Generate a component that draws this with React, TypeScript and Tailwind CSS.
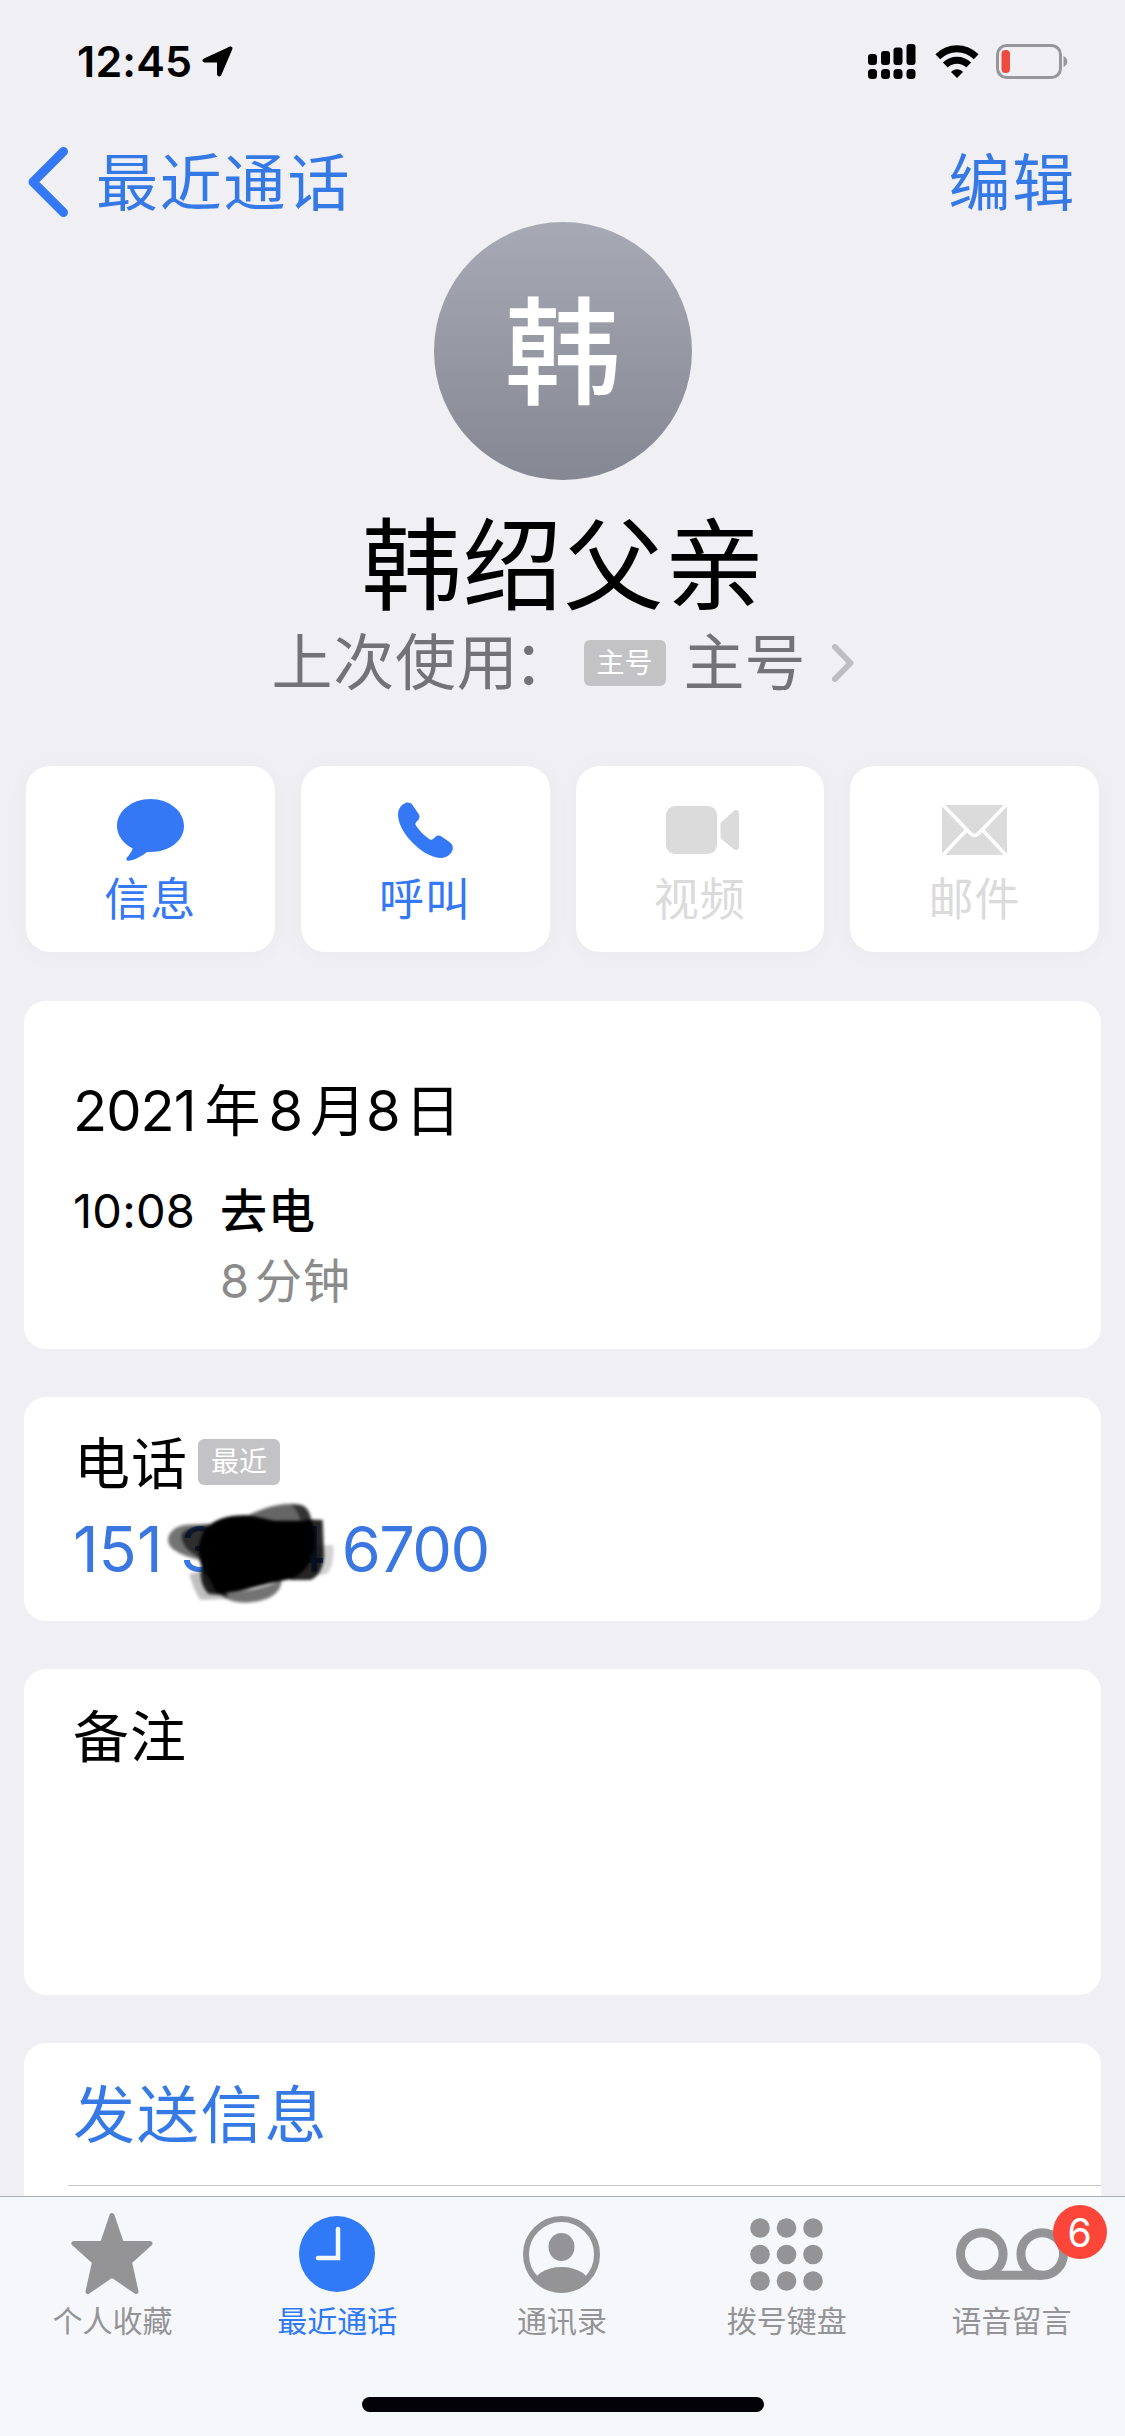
import type { ReactNode } from "react";

type QuickAction = {
  id: string;
  label: string;
  enabled: boolean;
  icon: ReactNode;
};

type Tab = {
  id: string;
  label: string;
  icon: ReactNode;
  badge?: number;
};

const actions: QuickAction[] = [
  {
    id: "message",
    label: "信息",
    enabled: true,
    icon: (
      <svg width="67" height="62" viewBox="0 0 67 62" fill="currentColor">
        <path d="M33.500 0C52 0 67 12 67 27S52 53 33.500 53h-3.500C25 57 18 61 12 61.800 9.600 62 8.600 60 10 58.500c2.400-2.600 4.600-5.600 5.700-9C6.200 44.800 0 36.500 0 27 0 12 15 0 33.500 0z" />
      </svg>
    ),
  },
  {
    id: "call",
    label: "呼叫",
    enabled: true,
    icon: (
      <svg width="55" height="56" viewBox="0 0 55 56" fill="currentColor">
        <path d="M7.500 1C9.500 .2 12.500 .4 14.500 3l6.300 9.300c1.300 2.300.7 4.300-.9 6l-1.800 2c-1 1.100-.9 2 0 3.500 1.800 2.800 4 5.300 6.300 7.600 2.300 2.200 4.700 4.200 7.200 5.800 1.300.9 2.400.8 3.400-.1l2.300-2.200c1.500-1.500 3.600-2 5.800-.7l8.700 6c3.700 2.700 3.900 7.300 1.200 10.800-2.600 3.300-6.500 5-10.700 5C32 55.500 20.500 47.500 12 38 4.800 29.800 0 20.500 0 12.500 0 7.500 3 2.800 7.500 1z" />
      </svg>
    ),
  },
  {
    id: "video",
    label: "视频",
    enabled: false,
    icon: (
      <svg className="ml-[6px]" width="73" height="48" viewBox="0 0 73 48" fill="currentColor">
        <rect width="51" height="48" rx="9" />
        <path d="M54.500 17 67.500 5.200c2.300-2 5.500-1.200 5.500 2V41c0 3-3.200 4-5.500 2L56 33.500c-1-.9-1.500-2-1.500-3.500z" />
      </svg>
    ),
  },
  {
    id: "mail",
    label: "邮件",
    enabled: false,
    icon: (
      <svg width="65" height="50" viewBox="0 0 65 50">
        <rect width="65" height="50" rx="2" fill="currentColor" />
        <path d="M1 0 28.500 28.500c2.500 2.600 5.500 2.600 8 0L64 0M1 50 24.500 25M64 50 40.500 25" fill="none" stroke="#fff" strokeWidth="3.500" />
      </svg>
    ),
  },
];

const tabs: Tab[] = [
  {
    id: "favorites",
    label: "个人收藏",
    icon: (
      <svg width="82" height="82" viewBox="0 0 82 82" fill="currentColor" stroke="currentColor" strokeWidth="5" strokeLinejoin="round">
        <path d="M41 2.500 50.500 30.500H79L58.500 49 65 78.500 41 62 17 78.500 23.500 49 3 30.500H31.500z" />
      </svg>
    ),
  },
  {
    id: "recents",
    label: "最近通话",
    icon: (
      <svg width="76" height="76" viewBox="0 0 76 76">
        <circle cx="38" cy="38" r="38" fill="currentColor" />
        <path d="M39 13V42H19" fill="none" stroke="#f7f8fc" strokeWidth="4.500" strokeLinecap="round" strokeLinejoin="miter" />
      </svg>
    ),
  },
  {
    id: "contacts",
    label: "通讯录",
    icon: (
      <svg width="77" height="77" viewBox="0 0 77 77">
        <clipPath id="contact-ring">
          <circle cx="38.500" cy="38.500" r="36" />
        </clipPath>
        <circle cx="38.500" cy="38.500" r="35.500" fill="none" stroke="currentColor" strokeWidth="6" />
        <ellipse cx="38.500" cy="31" rx="13" ry="14" fill="currentColor" />
        <ellipse cx="38.500" cy="70" rx="29" ry="19" fill="currentColor" clipPath="url(#contact-ring)" />
      </svg>
    ),
  },
  {
    id: "keypad",
    label: "拨号键盘",
    icon: (
      <svg width="73" height="73" viewBox="0 0 73 73" fill="currentColor">
        {[10, 36.5, 63].map((cy) =>
          [10, 36.5, 63].map((cx) => <circle key={`${cx}-${cy}`} cx={cx} cy={cy} r="9.800" />)
        )}
      </svg>
    ),
  },
  {
    id: "voicemail",
    label: "语音留言",
    badge: 6,
    icon: (
      <svg width="112" height="52" viewBox="0 0 112 52" fill="none" stroke="currentColor" strokeWidth="9">
        <circle cx="25.800" cy="26" r="21.300" />
        <circle cx="86.200" cy="26" r="21.300" />
        <path d="M25.800 47.200H86.200" />
      </svg>
    ),
  },
];

function StatusBar() {
  return (
    <div className="flex h-[122px] items-center justify-between pt-[1px] pr-[57px] pl-[77px]">
      <div className="flex items-center">
        <span className="text-[43px] leading-none font-semibold tracking-[0.2px]">12:45</span>
        <svg className="ml-[10px]" width="31" height="31" viewBox="0 0 31 31">
          <path d="M2 12.500 27.500 .8c2-.9 3.600.6 2.700 2.700L19.300 29c-1 2.300-4.300 1.700-4.300-.9V16.500H3C.2 16.500-.6 13.700 2 12.500z" />
        </svg>
      </div>
      <div className="flex items-center">
        <svg width="48" height="35" viewBox="0 0 48 35">
          <rect x="0" y="10" width="9" height="11" rx="3" />
          <rect x="13" y="7" width="9" height="14" rx="3" />
          <rect x="25.500" y="3.500" width="9" height="17.500" rx="3" />
          <rect x="38.500" y="0" width="9" height="21" rx="3" />
          <rect x="0" y="25" width="9" height="10" rx="3.500" />
          <rect x="13" y="25" width="9" height="10" rx="3.500" />
          <rect x="25.500" y="25" width="9" height="10" rx="3.500" />
          <rect x="38.500" y="25" width="9" height="10" rx="3.500" />
        </svg>
        <svg className="ml-[19px]" width="44" height="33" viewBox="0 0 44 33">
          <path d="M2.800 11.800C14 1.200 30 1.200 41.200 11.800" fill="none" stroke="#000" strokeWidth="7" />
          <path d="M10.300 20C17 13.700 27 13.700 33.700 20" fill="none" stroke="#000" strokeWidth="7" />
          <path d="M22 33 16 27c3.500-3.800 8.500-3.800 12 0z" />
        </svg>
        <svg className="ml-[17px]" width="72" height="35" viewBox="0 0 72 35">
          <rect x="1.500" y="1.500" width="63" height="32" rx="9" fill="none" stroke="#97979b" strokeWidth="3" />
          <rect x="5.500" y="6" width="8.500" height="23" rx="4" fill="#ee4a40" />
          <path d="M67.500 12c5 2 5 9 0 11z" fill="#97979b" />
        </svg>
      </div>
    </div>
  );
}

function Tag({ children }: { children: ReactNode }) {
  return (
    <span className="flex h-[46px] w-[82px] items-center justify-center rounded-[6px] bg-[#c3c3c6] pt-[1px] text-[28px] leading-none text-white">
      {children}
    </span>
  );
}

// Hand-drawn marker strokes over the middle of the number
function Scribble() {
  return (
    <svg className="absolute top-[-14px] left-[77px]" width="200" height="124" viewBox="0 0 600 372">
      <defs>
        <filter id="soft">
          <feGaussianBlur stdDeviation="4" />
        </filter>
      </defs>
      <g filter="url(#soft)">
        {/* lighter passes around the edge */}
        <path d="M270 88C320 62 370 42 420 42c40-2 54 8 62 36l6 32-200 10z" opacity=".6" />
        <path d="M424 44c30-4 46 8 54 32l12 36-34 4c-4-30-12-54-32-72z" opacity=".5" />
        <path d="M54 150c0-24 24-44 60-46l110-4-20 120c-60-8-150-30-150-70z" opacity=".55" />
        <path d="M96 130c20-18 60-26 100-26v110c-50-4-110-40-100-84z" opacity=".6" />
        <path d="M118 252l60-16 60 90-86 4c-16-20-26-48-34-78z" opacity=".25" />
        <path d="M152 240h60l20 76-56-4c-18-16-26-44-24-72z" opacity=".85" />
        <path d="M200 300c60 10 130 0 194-30 2 40-40 66-108 68-44 0-72-14-86-38z" opacity=".55" />
        <path d="M470 88l48 2 4 110c-4 40-18 60-42 70h-60z" opacity=".85" />
        <path d="M500 166h50c2 40-4 70-20 86l-40 6z" opacity=".18" />
        {/* solid core */}
        <path d="M172 112C196 86 240 74 290 76c28 2 54 12 84 16h110c14 40 14 80 2 104-10 32-26 54-60 70-40 8-86 16-136 32-30 8-64 12-92 8-10-16-16-40-38-62-16-36-24-90 12-132z" />
      </g>
    </svg>
  );
}

export default function App() {
  return (
    <div className="flex h-[2436px] w-[1125px] flex-col overflow-hidden bg-[#f0eff4] text-black [font-family:Inter,'Noto_Sans_CJK_SC',sans-serif]">
      <StatusBar />

      {/* Navigation */}
      <nav className="flex h-[100px] shrink-0 items-center justify-between pt-[20px] pr-[49px] pl-[28px] text-[62px] leading-none tracking-[1.800px] text-[#3579e6]">
        <a className="flex items-center">
          <svg width="40" height="70" viewBox="0 0 40 70" fill="none" stroke="#3478f6" strokeWidth="9" strokeLinecap="round" strokeLinejoin="round">
            <path d="M35.500 4.500 5 35 35.500 65.500" />
          </svg>
          <span className="ml-[28px] pt-[3px]">最近通话</span>
        </a>
        <a className="pt-[3px]">编辑</a>
      </nav>

      {/* Contact header */}
      <header className="flex shrink-0 flex-col items-center">
        <div className="flex size-[258px] items-center justify-center rounded-full bg-linear-to-b from-[#a7a9b5] to-[#858792] pt-[4px] text-[116px] leading-none font-medium text-white">
          韩
        </div>
        <h1 className="mt-[26px] pl-[2px] text-[100px] leading-[120px] tracking-[1px]">韩绍父亲</h1>
        <div className="flex h-[73px] items-center text-[61px] leading-none text-[#737377]">
          <span className="pt-[2px] tracking-[0.800px]">上次使用</span>
          <span className="-ml-[5px] pt-[2px]">：</span>
          <span className="ml-[9px]">
            <Tag>主号</Tag>
          </span>
          <span className="ml-[18px] pt-[2px]">主号</span>
          <svg className="ml-[26px]" width="22" height="38" viewBox="0 0 22 38" fill="none" stroke="#bebec2" strokeWidth="6" strokeLinecap="round" strokeLinejoin="round">
            <path d="M3 3 18.500 19 3 35" />
          </svg>
        </div>
      </header>

      {/* Quick actions */}
      <div className="mt-[67px] grid shrink-0 grid-cols-4 gap-[26px] px-[26px]">
        {actions.map((action) => (
          <button
            key={action.id}
            className={`flex h-[186px] flex-col items-center rounded-[24px] bg-white pt-[28px] shadow-[0_2px_24px_rgba(0,0,0,0.03)] ${
              action.enabled ? "text-[#3478f6]" : "text-[#dbdbdb]"
            }`}
          >
            <span className="flex h-[72px] items-center">{action.icon}</span>
            <span className="mt-[9px] text-[45px] leading-[50px] tracking-[1px]">{action.label}</span>
          </button>
        ))}
      </div>

      <main className="mt-[49px] flex min-h-0 flex-1 flex-col gap-[48px] px-[24px]">
        {/* Call log */}
        <section className="h-[348px] shrink-0 rounded-[22px] bg-white px-[49px] pt-[70px]">
          <div className="flex h-[80px] items-center text-[56px] leading-none">
            <span className="tracking-[-1px]">2021</span>
            <span className="ml-[9px]">年</span>
            <span className="ml-[8px]">8</span>
            <span className="ml-[7px]">月</span>
            <span>8</span>
            <span className="ml-[4px]">日</span>
          </div>
          <div className="mt-[24px] flex h-[70px] items-center text-[47px] leading-none">
            <span className="w-[147px] tracking-[0.200px]">10:08</span>
            <span className="font-medium tracking-[1px]">去电</span>
          </div>
          <div className="flex h-[70px] items-center pl-[147px] text-[47px] leading-none text-[#8b8b8b]">
            <span>8</span>
            <span className="ml-[6px] tracking-[1px]">分钟</span>
          </div>
        </section>

        {/* Phone number */}
        <section className="h-[224px] shrink-0 rounded-[22px] bg-white px-[50px] pt-[32px]">
          <div className="flex h-[70px] items-center text-[56px] leading-none">
            <span className="tracking-[1px]">电话</span>
            <span className="mb-[5px] ml-[10px]">
              <Tag>最近</Tag>
            </span>
          </div>
          <div className="relative mt-[5px] -ml-[1px] flex h-[90px] items-center text-[63px] leading-none text-[#3b77e0]">
            <span className="w-[107px]">151</span>
            <span>3</span>
            <span className="ml-[67px]">4</span>
            <span className="ml-[15px] tracking-[-1.500px]">6700</span>
            <Scribble />
          </div>
        </section>

        {/* Notes */}
        <section className="h-[326px] shrink-0 rounded-[22px] bg-white px-[49px] pt-[33px]">
          <div className="flex h-[70px] items-center text-[56px] leading-none tracking-[1px]">备注</div>
        </section>

        <section className="h-[153px] shrink-0 rounded-t-[22px] bg-white pl-[44px]">
          <div className="flex h-[143px] items-center border-b border-[#c8c8c6] pt-[4px] pl-[5px] text-[62px] leading-none tracking-[1.800px] text-[#3579e6]">
            发送信息
          </div>
        </section>
      </main>

      {/* Tab bar */}
      <footer className="flex h-[240px] shrink-0 flex-col items-center border-t border-[#adadb1] bg-[#f6f7fa]">
        <div className="grid w-full grid-cols-5 pt-[18px] pr-[1px]">
          {tabs.map((tab) => (
            <div
              key={tab.id}
              className={`flex flex-col items-center ${tab.id === "recents" ? "text-[#3079f7]" : "text-[#949497]"}`}
            >
              <span className="relative flex h-[78px] items-center">
                {tab.icon}
                {tab.badge && (
                  <span className="absolute top-[-10px] right-[-39px] flex size-[54px] items-center justify-center rounded-full bg-[#fb4639] text-[39px] leading-none text-white">
                    {tab.badge}
                  </span>
                )}
              </span>
              <span className="mt-[10px] text-[30px] leading-[36px]">{tab.label}</span>
            </div>
          ))}
        </div>
        <div className="mt-[58px] h-[15px] w-[402px] rounded-full bg-[#020208]" />
      </footer>
    </div>
  );
}
